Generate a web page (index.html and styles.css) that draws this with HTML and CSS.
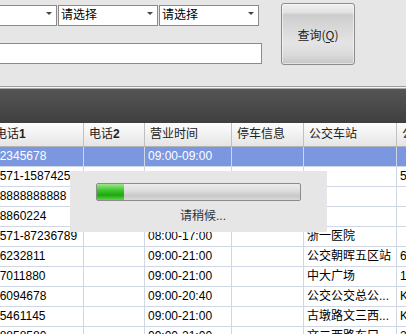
FILE: index.html
```html
<!DOCTYPE html>
<html lang="zh-CN">
<head>
    <meta charset="UTF-8">
    <title>商户查询</title>
    <link rel="stylesheet" href="styles.css">
</head>
<body>
    <div class="window">
        <div class="toolbar">
            <div class="filters">
                <div class="filter-row">
                    <div class="combo"><span class="combo-text"></span><span class="combo-arrow"></span></div>
                    <div class="combo"><span class="combo-text">请选择</span><span class="combo-arrow"></span></div>
                    <div class="combo"><span class="combo-text">请选择</span><span class="combo-arrow"></span></div>
                </div>
                <div class="keyword"></div>
            </div>
            <button class="btn-query">查询(<u>Q</u>)</button>
        </div>
        <div class="divider"></div>
        <div class="banner"></div>

        <div class="grid">
            <div class="grid-row grid-head">
                <div class="cell">电话<b>1</b></div>
                <div class="cell">电话<b>2</b></div>
                <div class="cell">营业时间</div>
                <div class="cell">停车信息</div>
                <div class="cell">公交车站</div>
                <div class="cell">公交线路</div>
            </div>
            <div class="grid-row selected">
                <div class="cell">12345678</div>
                <div class="cell"></div>
                <div class="cell">09:00-09:00</div>
                <div class="cell"></div>
                <div class="cell"></div>
                <div class="cell"></div>
            </div>
            <div class="grid-row">
                <div class="cell">0571-1587425</div>
                <div class="cell"></div>
                <div class="cell"></div>
                <div class="cell"></div>
                <div class="cell"></div>
                <div class="cell">5</div>
            </div>
            <div class="grid-row">
                <div class="cell">88888888888</div>
                <div class="cell"></div>
                <div class="cell"></div>
                <div class="cell"></div>
                <div class="cell"></div>
                <div class="cell"></div>
            </div>
            <div class="grid-row">
                <div class="cell">38860224</div>
                <div class="cell"></div>
                <div class="cell"></div>
                <div class="cell"></div>
                <div class="cell"></div>
                <div class="cell"></div>
            </div>
            <div class="grid-row">
                <div class="cell">0571-87236789</div>
                <div class="cell"></div>
                <div class="cell">08:00-17:00</div>
                <div class="cell"></div>
                <div class="cell">浙一医院</div>
                <div class="cell"></div>
            </div>
            <div class="grid-row">
                <div class="cell">56232811</div>
                <div class="cell"></div>
                <div class="cell">09:00-21:00</div>
                <div class="cell"></div>
                <div class="cell">公交朝晖五区站</div>
                <div class="cell">6</div>
            </div>
            <div class="grid-row">
                <div class="cell">87011880</div>
                <div class="cell"></div>
                <div class="cell">09:00-21:00</div>
                <div class="cell"></div>
                <div class="cell">中大广场</div>
                <div class="cell">1</div>
            </div>
            <div class="grid-row">
                <div class="cell">86094678</div>
                <div class="cell"></div>
                <div class="cell">09:00-20:40</div>
                <div class="cell"></div>
                <div class="cell">公交公交总公...</div>
                <div class="cell">K</div>
            </div>
            <div class="grid-row">
                <div class="cell">85461145</div>
                <div class="cell"></div>
                <div class="cell">09:00-21:00</div>
                <div class="cell"></div>
                <div class="cell">古墩路文三西...</div>
                <div class="cell">K</div>
            </div>
            <div class="grid-row">
                <div class="cell">88858580</div>
                <div class="cell"></div>
                <div class="cell">09:00-21:00</div>
                <div class="cell"></div>
                <div class="cell">文二西路东口</div>
                <div class="cell">2</div>
            </div>
        </div>

        <!-- loading popup sits over the grid -->
        <div class="loading">
            <div class="progress">
                <div class="progress-bar" style="width: 27px;"></div>
            </div>
            <div class="loading-text">请稍候...</div>
        </div>
    </div>
</body>
</html>
```

FILE: styles.css
```css
body {
    margin: 0;
    font-family: "Liberation Sans", "Noto Sans CJK SC", sans-serif;
    font-size: 12px;
    color: #000;
    background: #e6e6e6;
}
.window {
    position: relative;
    width: 406px;
    height: 334px;
    overflow: hidden;
    display: flex;
    flex-direction: column;
}
.toolbar {
    display: flex;
    align-items: flex-start;
    height: 86px;
    flex-shrink: 0;
}
.filters {
    display: flex;
    flex-direction: column;
    gap: 17px;
    margin-left: -43px;
    padding-top: 5px;
}
.filter-row {
    display: flex;
    gap: 1px;
}
.combo {
    box-sizing: border-box;
    width: 100px;
    height: 21px;
    display: flex;
    align-items: center;
    background: #fff;
    border: 1px solid #8a8a8a;
    padding-left: 2px;
}
.combo-text {
    flex: 1;
    line-height: 19px;
}
.combo-arrow {
    width: 0;
    height: 0;
    border-left: 3px solid transparent;
    border-right: 3px solid transparent;
    border-top: 3px solid #444;
    margin: 0 4px 4px 0;
}
.keyword {
    box-sizing: border-box;
    width: 305px;
    height: 21px;
    background: #fff;
    border: 1px solid #8a8a8a;
}
.btn-query {
    box-sizing: border-box;
    width: 74px;
    height: 62px;
    margin: 3px 0 0 19px;
    padding: 0;
    border: 1px solid #8c8c8c;
    border-radius: 3px;
    background: linear-gradient(#f0f0f0 0%, #e2e2e2 14%, #cdcdcd 18%, #d6d6d6 35%, #e4e4e4 65%, #dadada 85%, #c6c6c6 100%);
    box-shadow: inset 0 0 0 1px rgba(255,255,255,0.5);
    font-family: "Noto Sans CJK SC", "Liberation Sans", sans-serif;
    font-size: 12px;
    color: #222;
}
.btn-query u {
    text-underline-offset: 2px;
}
.divider {
    height: 1px;
    flex-shrink: 0;
    background: #9c9c9c;
    border-bottom: 1px solid #f4f4f4;
    box-shadow: 0 1px 0 #a8a8a8;
    margin-bottom: 1px;
}
.banner {
    height: 34px;
    flex-shrink: 0;
    background: linear-gradient(#555555, #3f3f3f);
}
.grid {
    background: #fff;
    flex: 1;
    margin-left: -10px;
}
.grid-row {
    display: grid;
    grid-template-columns: 94px 61px 87px 72px 93px 60px;
    height: 20px;
}
.cell {
    box-sizing: border-box;
    border-right: 1px solid #d0d7e4;
    border-bottom: 1px solid #d0d7e4;
    padding-left: 3px;
    line-height: 19px;
    white-space: nowrap;
    overflow: hidden;
}
.grid-head {
    height: 24px;
    background: linear-gradient(#fdfdfd, #e4e4e4);
}
.grid-head .cell {
    border-right-color: #c0c0c0;
    border-bottom-color: #b4b4b4;
    padding-left: 5px;
    line-height: 23px;
    color: #222;
}
.selected {
    background: #7b97df;
    color: #fff;
}
.loading {
    position: absolute;
    left: 70px;
    top: 171px;
    width: 257px;
    height: 61px;
    box-sizing: border-box;
    padding: 12px 0 0 26px;
    background: #e6e6e6;
}
.progress {
    box-sizing: border-box;
    width: 205px;
    height: 18px;
    border: 1px solid #8c8c8c;
    border-radius: 2px;
    background: linear-gradient(#ececec 0%, #dedede 40%, #c8c8c8 75%, #dadada 100%);
    overflow: hidden;
}
.progress-bar {
    height: 100%;
    background: linear-gradient(#9fe58f 0%, #3ec42c 40%, #1ea80f 70%, #5fd64c 100%);
}
.loading-text {
    margin-top: 8px;
    padding-left: 84px;
    line-height: 14px;
    color: #333;
}
```
